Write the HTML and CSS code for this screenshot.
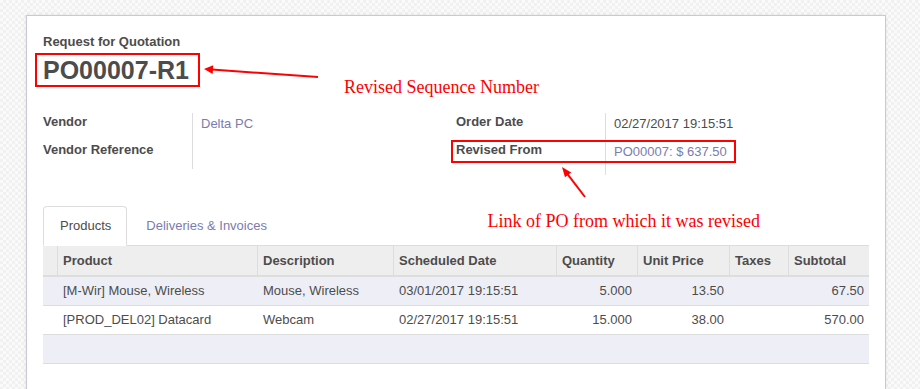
FILE: index.html
```html
<!DOCTYPE html>
<html lang="en">
<head>
  <meta charset="UTF-8">
  <meta name="viewport" content="width=device-width, initial-scale=1.0">
  <title>PO00007-R1 - Purchase</title>
  <link rel="stylesheet" href="styles.css">
</head>
<body>
  <div class="sheet">
    <div class="doc-type">Request for Quotation</div>
    <h1 class="doc-name">PO00007-R1</h1>

    <div class="groups">
      <table class="group">
        <tr>
          <td class="label">Vendor</td>
          <td class="value"><a href="#">Delta PC</a></td>
        </tr>
        <tr>
          <td class="label">Vendor Reference</td>
          <td class="value"></td>
        </tr>
      </table>
      <table class="group">
        <tr>
          <td class="label">Order Date</td>
          <td class="value">02/27/2017 19:15:51</td>
        </tr>
        <tr>
          <td class="label">Revised From</td>
          <td class="value tall"><a href="#">PO00007: $ 637.50</a></td>
        </tr>
      </table>
    </div>

    <ul class="tabs">
      <li class="active"><a href="#">Products</a></li>
      <li><a href="#">Deliveries &amp; Invoices</a></li>
    </ul>

    <table class="lines">
      <colgroup>
        <col style="width: 14px">
        <col style="width: 200px">
        <col style="width: 136px">
        <col style="width: 163px">
        <col style="width: 81px">
        <col style="width: 92px">
        <col style="width: 59px">
        <col style="width: 81px">
      </colgroup>
      <thead>
        <tr>
          <th></th>
          <th>Product</th>
          <th>Description</th>
          <th>Scheduled Date</th>
          <th>Quantity</th>
          <th>Unit Price</th>
          <th>Taxes</th>
          <th>Subtotal</th>
        </tr>
      </thead>
      <tbody>
        <tr>
          <td></td>
          <td>[M-Wir] Mouse, Wireless</td>
          <td>Mouse, Wireless</td>
          <td>03/01/2017 19:15:51</td>
          <td class="num">5.000</td>
          <td class="num">13.50</td>
          <td></td>
          <td class="num">67.50</td>
        </tr>
        <tr>
          <td></td>
          <td>[PROD_DEL02] Datacard</td>
          <td>Webcam</td>
          <td>02/27/2017 19:15:51</td>
          <td class="num">15.000</td>
          <td class="num">38.00</td>
          <td></td>
          <td class="num">570.00</td>
        </tr>
        <tr class="empty">
          <td colspan="8">&nbsp;</td>
        </tr>
      </tbody>
    </table>
  </div>

  <!-- red notes drawn over the form -->
  <svg class="notes" width="920" height="389" viewBox="0 0 920 389">
    <rect x="36" y="54" width="163" height="32" />
    <line x1="318" y1="77" x2="212" y2="69.6" />
    <polygon points="204,69 213.2,65.2 212.7,74" />
    <text x="344" y="93">Revised Sequence Number</text>

    <rect x="452" y="141" width="283" height="21" />
    <line x1="585" y1="197" x2="567.5" y2="174.2" />
    <polygon points="562,167 571.2,172.6 565,177.3" />
    <text x="487.5" y="227">Link of PO from which it was revised</text>
  </svg>
</body>
</html>
```

FILE: styles.css
```css
html, body {
  margin: 0;
  height: 100%;
  overflow: hidden;
}

body {
  font-family: "Liberation Sans", Arial, sans-serif;
  font-size: 13px;
  line-height: 18px;
  color: #4c4c4c;
  background-color: #f6f6f6;
  background-image: repeating-conic-gradient(#f1f1f1 0 25%, #fafafa 0 50%);
  background-size: 6px 6px;
}

a {
  color: #7c7bad;
  text-decoration: none;
}

/* Form sheet */
.sheet {
  box-sizing: border-box;
  width: 860px;
  min-height: 600px;
  margin: 15px 0 0 26px;
  padding: 17px 16px 40px;
  background: #fff;
  border: 1px solid #c8c8d6;
  box-shadow: 0 0 4px rgba(0, 0, 0, 0.08);
}

.doc-type {
  font-weight: bold;
}

.doc-name {
  margin: 4px 0 0;
  font-size: 25px;
  line-height: 30px;
  font-weight: bold;
}

/* Field groups */
.groups {
  display: grid;
  grid-template-columns: 1fr 1fr;
  margin-top: 28px;
  align-items: start;
}

.group {
  border-collapse: collapse;
  width: 100%;
}

.group td {
  padding: 0;
  vertical-align: top;
}

.group .label {
  width: 149px;
  padding-bottom: 10px;
  font-weight: bold;
}

.group .value {
  border-left: 1px solid #ddd;
  padding: 2px 0 8px 8px;
}

.group .value.tall {
  padding-bottom: 14px;
}

/* Notebook tabs */
.tabs {
  display: flex;
  margin: 31px 0 0;
  padding: 0;
  list-style: none;
  border-bottom: 1px solid #ddd;
}

.tabs li {
  margin: 0 2px -1px 0;
  border: 1px solid transparent;
  border-radius: 4px 4px 0 0;
}

.tabs li a {
  display: block;
  padding: 10px 15px 10px 16px;
}

.tabs li.active {
  background: #fff;
  border-color: #ddd #ddd transparent;
}

.tabs li.active a {
  color: #4c4c4c;
}

/* Order lines */
.lines {
  width: 826px;
  table-layout: fixed;
  border-collapse: separate;
  border-spacing: 0;
}

.lines th {
  padding: 6px 6px 5px;
  text-align: left;
  font-weight: bold;
  background: #eee;
  border-bottom: 2px solid #ddd;
  white-space: nowrap;
}

.lines th + th {
  border-left: 1px solid #ddd;
  padding-left: 5px;
}

.lines td {
  padding: 5px 6px;
  border-bottom: 1px solid #ddd;
  white-space: nowrap;
}

.lines td.num {
  text-align: right;
  padding-right: 5px;
}

.lines tbody tr:nth-child(odd) {
  background: #eeeff6;
}

/* Annotations */
.notes {
  position: absolute;
  top: 0;
  left: 0;
  pointer-events: none;
}

.notes rect {
  fill: none;
  stroke: #f00;
  stroke-width: 2;
}

.notes line {
  stroke: #f00;
  stroke-width: 2;
}

.notes polygon {
  fill: #f00;
}

.notes text {
  font-family: "Liberation Serif", "Times New Roman", serif;
  font-size: 18px;
  fill: #f00;
}
```
